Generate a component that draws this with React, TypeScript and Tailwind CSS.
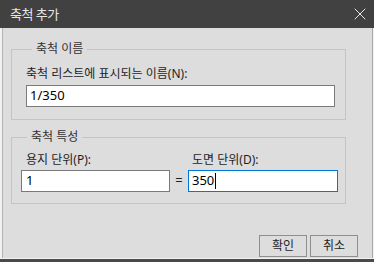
import { X } from "lucide-react";

const font = { fontFamily: '"Noto Sans", "Noto Sans CJK KR", sans-serif' };

export default function App() {
  return (
    <div
      className="w-[374px] h-[262px] flex flex-col bg-[#4a4a4a] text-[12px] text-[#1e1e1e]"
      style={font}
    >
      {/* title bar */}
      <div className="h-[28px] shrink-0 bg-[#414141] flex items-center justify-between pl-[10px] pr-[4px]">
        <span className="text-[13px] text-[#e6e6e6] leading-none tracking-[-0.5px]">축척 추가</span>
        <X className="w-[20px] h-[20px] text-[#e6e6e6]" strokeWidth={1.2} />
      </div>

      {/* body */}
      <div className="h-[231px] shrink-0 bg-[#dddddd] border-l-2 border-r border-b border-l-[#f2f2f2] border-r-[#f2f2f2] border-b-[#f0f0f0] shadow-[inset_1px_0_#b4b4b4,inset_-1px_0_#a8a8a8] flex flex-col pl-[9px]">
        <fieldset className="mt-[13px] w-[335px] h-[79px] border border-[#c4c4c4] pl-[14px] pr-[10px]">
          <legend className="ml-[6px] px-[4px] leading-[16px] text-[#333]">축척 이름</legend>
          <div className="mt-[9px] leading-[16px]">축척 리스트에 표시되는 이름(N):</div>
          <div className="mt-[3px] w-[309px] h-[22px] bg-white border border-[#7a7a7a] flex items-center pl-[3px] text-[13px] text-black">
            1/350
          </div>
        </fieldset>

        <fieldset className="mt-[9px] w-[335px] h-[75px] border border-[#c4c4c4] pl-[9px]">
          <legend className="ml-[6px] px-[4px] leading-[16px] text-[#333]">축척 특성</legend>
          <div className="flex mt-[7px] leading-[16px]">
            <div className="w-[171px] pl-[5px]">용지 단위(P):</div>
            <div>도면 단위(D):</div>
          </div>
          <div className="flex items-center mt-[2px]">
            <div className="w-[149px] h-[22px] bg-white border border-[#7a7a7a] flex items-center pl-[4px] text-[13px] text-black">
              1
            </div>
            <div className="w-[18px] text-center text-[13px]">=</div>
            <div className="w-[150px] h-[22px] bg-white border border-[#0078d7] flex items-center pl-[3px] text-[13px] text-black">
              350<span className="w-px h-[16px] bg-black ml-[1px]" />
            </div>
          </div>
        </fieldset>

        <div className="flex justify-end gap-[3px] mt-[31px] pr-[15px]">
          <button className="w-[48px] h-[22px] border border-[#8f8f8f] bg-[#dddddd] text-[12px] leading-none">확인</button>
          <button className="w-[48px] h-[22px] border border-[#8f8f8f] bg-[#dddddd] text-[12px] leading-none">취소</button>
        </div>
      </div>
    </div>
  );
}
